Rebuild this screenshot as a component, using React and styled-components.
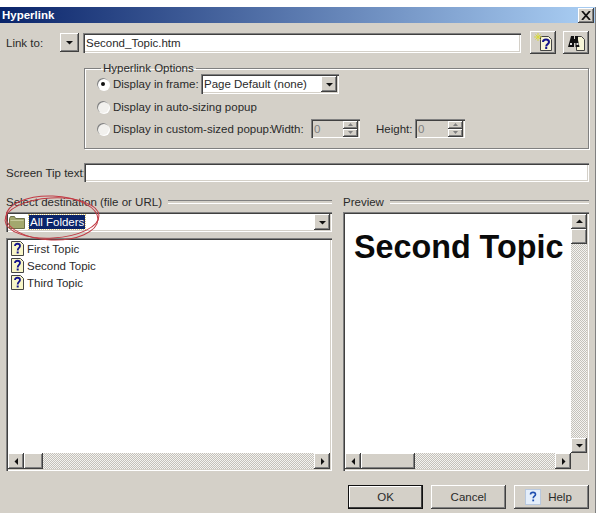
import React from "react";
import styled, { createGlobalStyle, css } from "styled-components";

const face = "#d4d0c8";

const raised = css`
  background: ${face};
  box-shadow: inset -1px -1px #404040, inset 1px 1px #fff, inset -2px -2px #808080;
`;

const sunken = css`
  box-shadow: inset 1px 1px #808080, inset 2px 2px #404040, inset -1px -1px #fff, inset -2px -2px ${face};
`;

const Global = createGlobalStyle`
  html, body { margin: 0; background: #fff; }
  * { box-sizing: border-box; }
`;

const Page = styled.div`
  width: 601px;
  height: 513px;
  padding-top: 7px;
  overflow: hidden;
  font-family: "Liberation Sans", Arial, sans-serif;
  font-size: 11.5px;
  color: #2a2a2a;
`;

const Dialog = styled.div`
  position: relative;
  width: 596px;
  height: 506px;
  background: ${face};
  border-right: 1px solid #808080;
`;

const TitleBar = styled.div`
  height: 16px;
  padding: 0 1px 0 2px;
  display: flex;
  align-items: center;
  justify-content: space-between;
  background: linear-gradient(90deg, #0a246a 0%, #a6caf0 97%);
  color: #fff;
  font-weight: 700;
  font-size: 11.5px;
`;

const CloseBtn = styled.div`
  ${raised};
  width: 16px;
  height: 15px;
  margin-top: 1px;
  display: flex;
  align-items: center;
  justify-content: center;
`;

const Body = styled.div`
  padding: 8px 6px 0 6px;
`;

const LinkRow = styled.div`
  height: 23px;
  display: flex;
  align-items: center;
`;

const Label = styled.span`
  white-space: nowrap;
`;

const LinkLabel = styled(Label)`
  width: 54px;
`;

const SmallBtn = styled.div`
  ${raised};
  flex: none;
  width: ${(p) => p.$w || 17}px;
  height: ${(p) => p.$h || 19}px;
  margin-right: ${(p) => p.$mr || 0}px;
  display: flex;
  align-items: center;
  justify-content: center;
`;

const Field = styled.div`
  ${sunken};
  background: ${(p) => (p.$disabled ? face : "#fff")};
  color: ${(p) => (p.$disabled ? "#808080" : "#2a2a2a")};
  height: ${(p) => p.$h || 20}px;
  width: ${(p) => (p.$w ? `${p.$w}px` : "auto")};
  flex: ${(p) => (p.$w ? "none" : 1)};
  padding: 0 3px;
  display: flex;
  align-items: center;
  justify-content: space-between;
  white-space: nowrap;
`;

const LinkField = styled(Field)`
  margin: 0 9px 0 4px;
`;

const Options = styled.fieldset`
  margin: 8px 0 0 78px;
  padding: 0 0 0 12px;
  height: 87px;
  border: 1px solid #808080;
  box-shadow: 1px 1px #fff, inset 1px 1px #fff;
`;

const Legend = styled.legend`
  margin-left: 4px;
  margin-bottom: -2px;
  padding: 0 2px;
  line-height: 13px;
  font-size: 11.5px;
`;

const OptionRow = styled.div`
  height: ${(p) => p.$h || 23}px;
  display: flex;
  align-items: center;
`;

const Radio = styled.span`
  width: 12px;
  height: 12px;
  margin-right: 4px;
  flex: none;
  border-radius: 50%;
  background: ${(p) => (p.$on ? "#fff" : "#f2f1ee")};
  box-shadow: inset 1px 1px #808080, 1px 1px #fff;
  display: flex;
  align-items: center;
  justify-content: center;
  &::after {
    content: "";
    display: ${(p) => (p.$on ? "block" : "none")};
    width: 4px;
    height: 4px;
    border-radius: 50%;
    background: #111;
  }
`;

const RadioText = styled(Label)`
  width: ${(p) => p.$w}px;
`;

const SizeLabel = styled(Label)`
  width: ${(p) => p.$w}px;
  margin-left: ${(p) => p.$ml || 0}px;
`;

const Spin = styled.div`
  display: flex;
  flex-direction: column;
  margin-right: -1px;
`;

const SpinBtn = styled.div`
  ${raised};
  width: 15px;
  height: 8px;
  display: flex;
  align-items: center;
  justify-content: center;
`;

const TipRow = styled.div`
  margin-top: 14px;
  height: 19px;
  display: flex;
  align-items: center;
`;

const TipLabel = styled(Label)`
  width: 78px;
`;

const Panes = styled.div`
  margin-top: 12px;
  display: grid;
  grid-template-columns: 326px 1fr;
  column-gap: 11px;
`;

const Pane = styled.div`
  display: flex;
  flex-direction: column;
`;

const PaneHead = styled.div`
  height: 16px;
  margin-bottom: 2px;
  display: flex;
  align-items: center;
  gap: 6px;
  &::after {
    content: "";
    flex: 1;
    height: 2px;
    border-top: 1px solid #808080;
    border-bottom: 1px solid #fff;
  }
`;

const ComboValue = styled.div`
  display: flex;
  align-items: center;
  flex: 1;
  gap: 4px;
`;

const Selected = styled.span`
  background: #0a246a;
  color: #fff;
  padding: 0 1px;
  line-height: 14px;
  outline: 1px dotted #d9c77a;
`;

const DropBtn = styled(SmallBtn)`
  margin-right: -1px;
`;

const ListBox = styled.div`
  ${sunken};
  background: #fff;
  margin-top: 6px;
  height: 233px;
  padding: 2px;
  display: flex;
  flex-direction: column;
`;

const Items = styled.div`
  flex: 1;
`;

const Item = styled.div`
  height: 17px;
  display: flex;
  align-items: center;
  gap: 3px;
  padding-left: 3px;
`;

const HBar = styled.div`
  flex: none;
  height: 16px;
  display: flex;
`;

const Track = styled.div`
  flex: 1;
  background: repeating-conic-gradient(#c4c1ba 0 25%, #f4f3f0 0 50%) 0 0 / 2px 2px;
`;

const Thumb = styled.div`
  ${raised};
  flex: none;
  width: ${(p) => p.$w || 16}px;
  height: ${(p) => p.$h || 16}px;
`;

const PreviewBox = styled.div`
  ${sunken};
  background: #fff;
  height: 259px;
  padding: 2px;
  display: grid;
  grid-template-columns: 1fr 16px;
  grid-template-rows: 1fr 16px;
`;

const PreviewBody = styled.div`
  padding: 14px 0 0 9px;
  font-size: 32.3px;
  font-weight: 700;
  line-height: 38px;
  color: #0a0a0a;
  white-space: nowrap;
  overflow: hidden;
`;

const VBar = styled.div`
  display: flex;
  flex-direction: column;
`;

const Corner = styled.div`
  background: ${face};
`;

const Footer = styled.div`
  margin-top: 14px;
  display: flex;
  justify-content: flex-end;
  gap: 8px;
`;

const Button = styled.div`
  ${raised};
  width: 75px;
  height: 24px;
  display: flex;
  align-items: center;
  justify-content: center;
  gap: 7px;
  ${(p) =>
    p.$default &&
    css`
      outline: 1px solid #111;
      outline-offset: -1px;
      box-shadow: inset -2px -2px #404040, inset 2px 2px #fff;
    `}
`;

const HelpGlyph = styled.span`
  display: flex;
  margin-left: -6px;
`;

const Circle = styled.svg`
  position: absolute;
  left: 3px;
  top: 187px;
  pointer-events: none;
`;

function Arrow({ dir = "down", size = 7 }) {
  const pts = {
    down: "0,2 7,2 3.5,5.5",
    up: "3.5,1.5 7,5 0,5",
    left: "5,0 5,7 1.5,3.5",
    right: "2,0 2,7 5.5,3.5",
  };
  return (
    <svg width={size} height={size} viewBox="0 0 7 7">
      <polygon points={pts[dir]} fill="#111" />
    </svg>
  );
}

function TinyArrow({ up }) {
  return (
    <svg width="5" height="3" viewBox="0 0 5 3">
      <polygon points={up ? "2.5,0 5,3 0,3" : "0,0 5,0 2.5,3"} fill="#808080" />
    </svg>
  );
}

function TopicIcon() {
  return (
    <svg width="13" height="15" viewBox="0 0 13 15">
      <path d="M.5.5h9l3 3v11H.5z" fill="#f8f6c8" stroke="#444" />
      <path d="M4 5c0-3 5-3 5 0 0 2-2.300 2-2.300 4.500" fill="none" stroke="#14148c" strokeWidth="1.800" />
      <rect x="5.700" y="10.500" width="2" height="2" fill="#14148c" />
    </svg>
  );
}

function FolderIcon() {
  return (
    <svg width="16" height="13" viewBox="0 0 16 13">
      <path d="M.5 2.500l1-2h4l1 2h9v10H.5z" fill="#a3a86e" stroke="#6e7048" />
      <path d="M1.500 4.500h13" stroke="#c6c99a" />
    </svg>
  );
}

function NewHelpIcon() {
  return (
    <svg width="19" height="19" viewBox="0 0 19 19">
      <path d="M6.500 3.500h8l3 3v11h-11z" fill="#f8f6d8" stroke="#444" />
      <path d="M9 9c0-3.400 6-3.400 6 0 0 2.200-2.800 2-2.800 4.500" fill="none" stroke="#14148c" strokeWidth="2" />
      <rect x="11.200" y="14" width="2" height="2" fill="#14148c" />
      <path d="M4 0v8M0 4h8M1.500 1.500l5 5M6.500 1.500l-5 5" stroke="#d8d83c" />
    </svg>
  );
}

function BinocularIcon() {
  return (
    <svg width="17" height="16" viewBox="0 0 17 16">
      <path d="M8.500 1.500h5l3 3v11h-8z" fill="#f8f6d8" stroke="#444" />
      <path d="M3 1h3v3h1v-3h3v4l1.500 7H7.500V8H6v4H0l2-7z" fill="#111" />
      <rect x="2" y="8" width="2" height="2" fill="#ddd" />
      <rect x="8.500" y="8" width="2" height="2" fill="#ddd" />
    </svg>
  );
}

function CloseIcon() {
  return (
    <svg width="10" height="9" viewBox="0 0 10 9">
      <path d="M1 0l8 9M9 0L1 9" stroke="#111" strokeWidth="1.800" />
    </svg>
  );
}

function HelpBadge() {
  return (
    <svg width="16" height="16" viewBox="0 0 16 16">
      <rect x=".5" y=".5" width="15" height="15" fill="#e4eefa" stroke="#b8c8de" />
      <path d="M5.500 5.500c0-2.800 5-2.800 5 0 0 1.800-2.300 1.700-2.300 3.800" fill="none" stroke="#1f4fb0" strokeWidth="1.600" />
      <rect x="7.300" y="10.500" width="1.800" height="1.800" fill="#1f4fb0" />
    </svg>
  );
}

function SizeInput({ width }) {
  return (
    <Field $disabled $w={width} $h={19}>
      0
      <Spin>
        <SpinBtn>
          <TinyArrow up />
        </SpinBtn>
        <SpinBtn>
          <TinyArrow />
        </SpinBtn>
      </Spin>
    </Field>
  );
}

const topics = ["First Topic", "Second Topic", "Third Topic"];

export default function App() {
  return (
    <Page>
      <Global />
      <Dialog>
        <TitleBar>
          Hyperlink
          <CloseBtn>
            <CloseIcon />
          </CloseBtn>
        </TitleBar>
        <Body>
          <LinkRow>
            <LinkLabel>Link to:</LinkLabel>
            <SmallBtn $w={19}>
              <Arrow />
            </SmallBtn>
            <LinkField $h={20}>Second_Topic.htm</LinkField>
            <SmallBtn $w={26} $h={23} $mr={7}>
              <NewHelpIcon />
            </SmallBtn>
            <SmallBtn $w={26} $h={23}>
              <BinocularIcon />
            </SmallBtn>
          </LinkRow>
          <Options>
            <Legend>Hyperlink Options</Legend>
            <OptionRow $h={22}>
              <Radio $on />
              <RadioText $w={88}>Display in frame:</RadioText>
              <Field $w={138} $h={20}>
                Page Default (none)
                <DropBtn $w={16} $h={16}>
                  <Arrow />
                </DropBtn>
              </Field>
            </OptionRow>
            <OptionRow>
              <Radio />
              <Label>Display in auto-sizing popup</Label>
            </OptionRow>
            <OptionRow $h={21}>
              <Radio />
              <RadioText $w={158}>Display in custom-sized popup:</RadioText>
              <SizeLabel $w={40}>Width:</SizeLabel>
              <SizeInput width={49} />
              <SizeLabel $w={39} $ml={16}>
                Height:
              </SizeLabel>
              <SizeInput width={50} />
            </OptionRow>
          </Options>
          <TipRow>
            <TipLabel>Screen Tip text:</TipLabel>
            <Field $h={19} />
          </TipRow>
          <Panes>
            <Pane>
              <PaneHead>Select destination (file or URL)</PaneHead>
              <Field $h={20}>
                <ComboValue>
                  <FolderIcon />
                  <Selected>All Folders</Selected>
                </ComboValue>
                <DropBtn $w={16} $h={16}>
                  <Arrow />
                </DropBtn>
              </Field>
              <ListBox>
                <Items>
                  {topics.map((t) => (
                    <Item key={t}>
                      <TopicIcon />
                      {t}
                    </Item>
                  ))}
                </Items>
                <HBar>
                  <SmallBtn $w={16} $h={16}>
                    <Arrow dir="left" />
                  </SmallBtn>
                  <Thumb $w={19} />
                  <Track />
                  <SmallBtn $w={16} $h={16}>
                    <Arrow dir="right" />
                  </SmallBtn>
                </HBar>
              </ListBox>
            </Pane>
            <Pane>
              <PaneHead>Preview</PaneHead>
              <PreviewBox>
                <PreviewBody>Second Topic</PreviewBody>
                <VBar>
                  <SmallBtn $w={16} $h={15}>
                    <Arrow dir="up" />
                  </SmallBtn>
                  <Thumb $h={15} />
                  <Track />
                  <SmallBtn $w={16} $h={15}>
                    <Arrow />
                  </SmallBtn>
                </VBar>
                <HBar>
                  <SmallBtn $w={16} $h={16}>
                    <Arrow dir="left" />
                  </SmallBtn>
                  <Thumb $w={54} />
                  <Track />
                  <SmallBtn $w={16} $h={16}>
                    <Arrow dir="right" />
                  </SmallBtn>
                </HBar>
                <Corner />
              </PreviewBox>
            </Pane>
          </Panes>
          <Footer>
            <Button $default>OK</Button>
            <Button>Cancel</Button>
            <Button>
              <HelpGlyph>
                <HelpBadge />
              </HelpGlyph>
              Help
            </Button>
          </Footer>
        </Body>
        <Circle width="100" height="50" viewBox="0 0 100 50">
          <ellipse cx="49" cy="24" rx="47" ry="20" fill="none" stroke="#c23a44" strokeWidth="1" transform="rotate(-3 49 24)" />
          <ellipse cx="49" cy="24" rx="46" ry="22" fill="none" stroke="#c23a44" strokeWidth="1" transform="rotate(2 49 24)" />
        </Circle>
      </Dialog>
    </Page>
  );
}
